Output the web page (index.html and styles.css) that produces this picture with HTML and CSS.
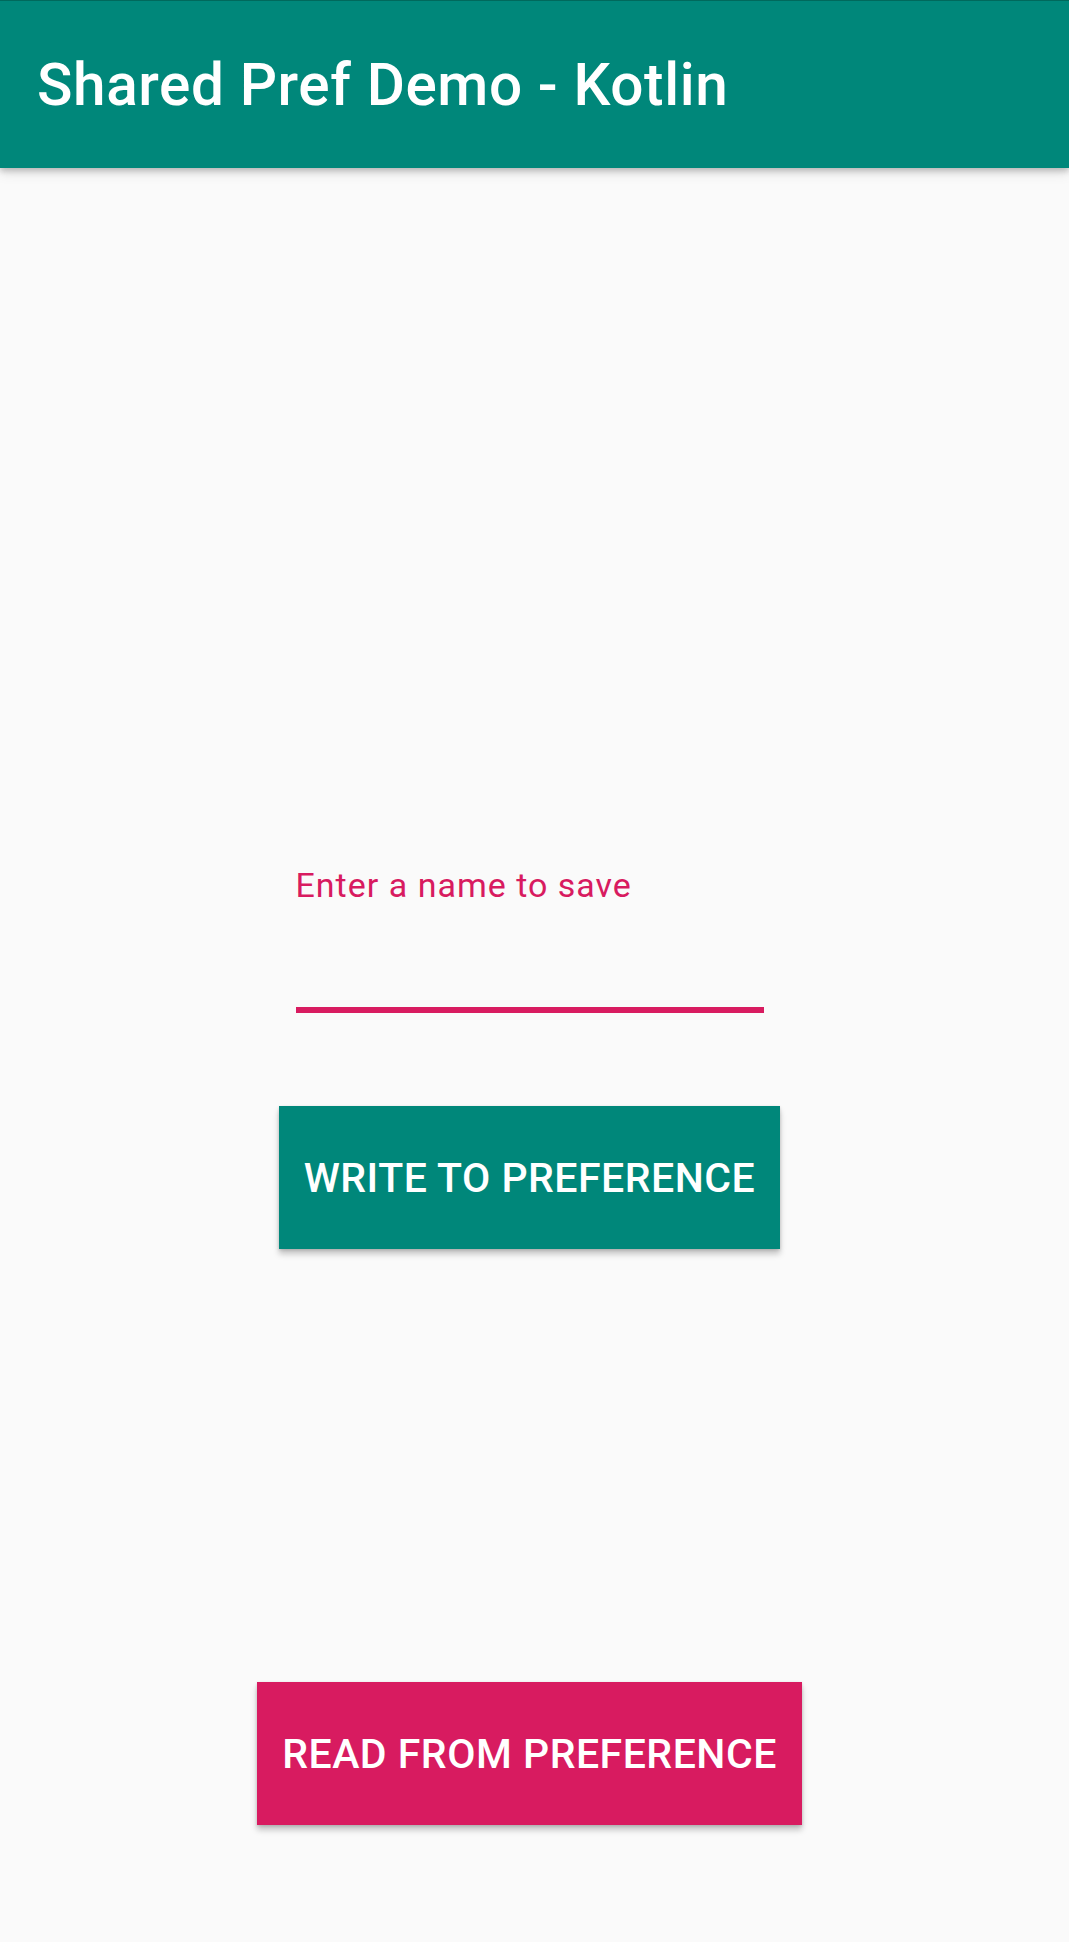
FILE: index.html
```html
<!DOCTYPE html>
<html lang="en">
<head>
<meta charset="utf-8">
<title>Shared Pref Demo - Kotlin</title>
<link rel="stylesheet" href="styles.css">
</head>
<body>
<header class="app-bar">
  <h1 class="app-title">Shared Pref Demo - Kotlin</h1>
</header>
<main class="content">
  <div class="field">
    <label class="field-label" for="name">Enter a name to save</label>
    <input class="field-input" id="name" type="text">
  </div>
  <button class="btn btn-write" type="button">WRITE TO PREFERENCE</button>
  <button class="btn btn-read" type="button">READ FROM PREFERENCE</button>
</main>
</body>
</html>
```

FILE: styles.css
```css
html, body {
  margin: 0;
  padding: 0;
}

body {
  background: #fafafa;
  font-family: Roboto, "Noto Sans", sans-serif;
  width: 1069px;
  min-height: 1942px;
  overflow: hidden;
}

.app-bar {
  position: relative;
  z-index: 1;
  height: 167px;
  background: #00877a;
  border-top: 1px solid #00695c;
  box-shadow: 0 3px 6px rgba(0, 0, 0, 0.22), 0 6px 12px rgba(0, 0, 0, 0.08);
  display: flex;
  align-items: flex-start;
  padding-left: 37px;
}

.app-title {
  margin: 0;
  padding-top: 51px;
  font-size: 58.5px;
  line-height: 67px;
  font-weight: 500;
  color: #ffffff;
  letter-spacing: 0.6px;
}

.content {
  display: flex;
  flex-direction: column;
  align-items: center;
  width: 1059px;
}

.field {
  margin-top: 697px;
  width: 468px;
  display: flex;
  flex-direction: column;
}

.field-label {
  font-size: 34px;
  line-height: 40px;
  color: #d81b60;
  letter-spacing: 1px;
}

.field-input {
  margin-top: 102px;
  height: 0;
  padding: 0;
  border: 0;
  border-bottom: 6px solid #d81b60;
  background: transparent;
  outline: none;
}

.btn {
  display: flex;
  align-items: center;
  justify-content: center;
  height: 143px;
  border: 0;
  padding: 0 25px;
  font-family: Roboto, "Noto Sans", sans-serif;
  font-size: 41px;
  font-weight: 500;
  color: #ffffff;
  letter-spacing: 0.5px;
  box-shadow: 0 5px 6px rgba(0, 0, 0, 0.22), 0 1px 3px rgba(0, 0, 0, 0.14);
}

.btn-write {
  margin-top: 93px;
  background: #00877a;
}

.btn-read {
  margin-top: 433px;
  background: #d81b60;
}
```
